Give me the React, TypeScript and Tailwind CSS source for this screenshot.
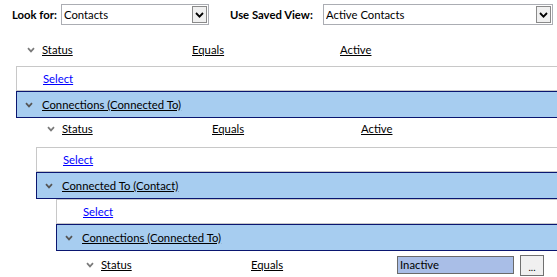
import React from "react";

function Chevron({ className }: { className?: string }) {
  return (
    <svg width="8" height="6" viewBox="0 0 8 6" className={className} aria-hidden>
      <path d="M1 1.2 L4 4.4 L7 1.2" fill="none" stroke="currentColor" strokeWidth="1.7" />
    </svg>
  );
}

function Dropdown({ value, className }: { value: string; className: string }) {
  return (
    <div className={`flex h-[21px] items-center border border-[#abadb3] bg-white pl-[2px] pr-[1px] ${className}`}>
      <span className="flex-1 truncate">{value}</span>
      <span className="flex h-[17px] w-[15px] items-center justify-center border border-[#8a8a8a] bg-[#f0f0f0]">
        <svg width="9" height="6" viewBox="0 0 9 6" aria-hidden>
          <path d="M1 1 L4.5 4.6 L8 1" fill="none" stroke="#000" strokeWidth="1.8" />
        </svg>
      </span>
    </div>
  );
}

function Condition({
  className,
  opWidth,
  value,
}: {
  className: string;
  opWidth: string;
  value: React.ReactNode;
}) {
  return (
    <div className={`flex h-[18px] items-center ${className}`}>
      <span className="flex w-[17px] pl-[2px] text-[#7a7a7a]">
        <Chevron />
      </span>
      <span className="w-[150px]">
        <span className="underline">Status</span>
      </span>
      <span className={opWidth}>
        <span className="underline">Equals</span>
      </span>
      {value}
    </div>
  );
}

function SelectRow({ className }: { className: string }) {
  return (
    <div className={`flex h-[25px] items-center border-y border-l border-[#c8c8c8] pl-[26px] ${className}`}>
      <span className="text-[#0000ff] underline">Select</span>
    </div>
  );
}

function GroupRow({ className, label }: { className: string; label: string }) {
  return (
    <div className={`flex h-[27px] items-center border-y border-l border-[#0a1670] bg-[#a7cdf0] ${className}`}>
      <span className="flex w-[25px] pl-[8px] text-[#555]">
        <Chevron />
      </span>
      <span className="underline">{label}</span>
    </div>
  );
}

export default function App() {
  return (
    <div className="h-[277px] w-[557px] overflow-hidden bg-white font-['Lato','Segoe_UI',sans-serif] text-[11.3px] leading-4 text-black">
      <div className="flex items-center pl-[12px] pt-[4px]">
        <span className="w-[49px] font-bold">Look for:</span>
        <Dropdown value="Contacts" className="w-[148px]" />
        <span className="ml-[21px] w-[93px] font-bold">Use Saved View:</span>
        <Dropdown value="Active Contacts" className="w-[230px]" />
      </div>

      <Condition
        className="mb-[7px] ml-[25px] mt-[16px]"
        opWidth="w-[148px]"
        value={<span className="underline">Active</span>}
      />
      <SelectRow className="ml-[16px]" />
      <GroupRow className="ml-[16px]" label="Connections (Connected To)" />

      <Condition
        className="mb-[9px] ml-[45px] mt-[2px]"
        opWidth="w-[149px]"
        value={<span className="underline">Active</span>}
      />
      <SelectRow className="ml-[36px]" />
      <GroupRow className="ml-[36px]" label="Connected To (Contact)" />

      <SelectRow className="ml-[56px]" />
      <GroupRow className="ml-[56px]" label="Connections (Connected To)" />

      <Condition
        className="ml-[84px] mt-[5px]"
        opWidth="w-[146px]"
        value={
          <div className="flex items-center">
            <span className="flex h-[18px] w-[117px] items-center border border-[#6a6a6a] bg-[#a9bee7] pl-[2px]">
              Inactive
            </span>
            <span className="ml-[6px] flex h-[21px] w-[24px] items-end justify-center border border-[#707070] bg-[#f0f0f0] pb-[3px] text-[10px] leading-none">
              ...
            </span>
          </div>
        }
      />
    </div>
  );
}
